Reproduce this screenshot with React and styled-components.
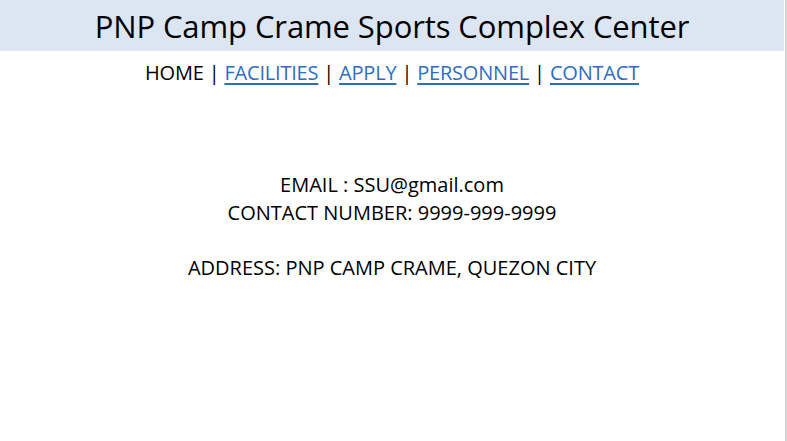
import React from 'react';
import styled, { createGlobalStyle } from 'styled-components';

const GlobalStyle = createGlobalStyle`
    html, body {
        margin: 0;
        padding: 0;
        background: #ffffff;
    }
    body {
        font-family: "Open Sans", "Liberation Sans", sans-serif;
        color: #000000;
    }
`;

const Page = styled.div`
    width: 784px;
    min-height: 441px;
    padding-right: 1px;
    border-right: 2px solid #d4d4d4;
    box-sizing: content-box;
`;

const Header = styled.header`
    background: #dce6f2;
    height: 51px;
    display: flex;
    align-items: center;
    justify-content: center;
`;

const Title = styled.h1`
    margin: 0;
    font-size: 31px;
    font-weight: 400;
    letter-spacing: -0.1px;
`;

const Nav = styled.nav`
    margin-top: 8px;
    text-align: center;
    font-size: 20px;
    letter-spacing: -0.2px;
    line-height: 28px;
`;

const NavLink = styled.a`
    color: ${props => props.current ? '#000000' : '#2e6ebf'};
    text-decoration: ${props => props.current ? 'none' : 'underline'};
    text-underline-offset: 3px;
`;

const Contact = styled.section`
    margin-top: 84px;
    text-align: center;
    font-size: 20px;
    line-height: 28px;
`;

const Line = styled.p`
    margin: 0;
    margin-top: ${props => props.gap ? '27px' : '0'};
`;

const links = ['HOME', 'FACILITIES', 'APPLY', 'PERSONNEL', 'CONTACT'];

export default function App () {
    return (
        <React.Fragment>
            <GlobalStyle />
            <Page>
                <Header>
                    <Title>PNP Camp Crame Sports Complex Center</Title>
                </Header>
                <Nav>
                    {links.map((name, index) => (
                        <React.Fragment key={name}>
                            {index > 0 && ' | '}
                            <NavLink href="#" current={index === 0}>{name}</NavLink>
                        </React.Fragment>
                    ))}
                </Nav>
                <Contact>
                    <Line>EMAIL : SSU@gmail.com</Line>
                    <Line>CONTACT NUMBER: 9999-999-9999</Line>
                    <Line gap>ADDRESS: PNP CAMP CRAME, QUEZON CITY</Line>
                </Contact>
            </Page>
        </React.Fragment>
    );
}
